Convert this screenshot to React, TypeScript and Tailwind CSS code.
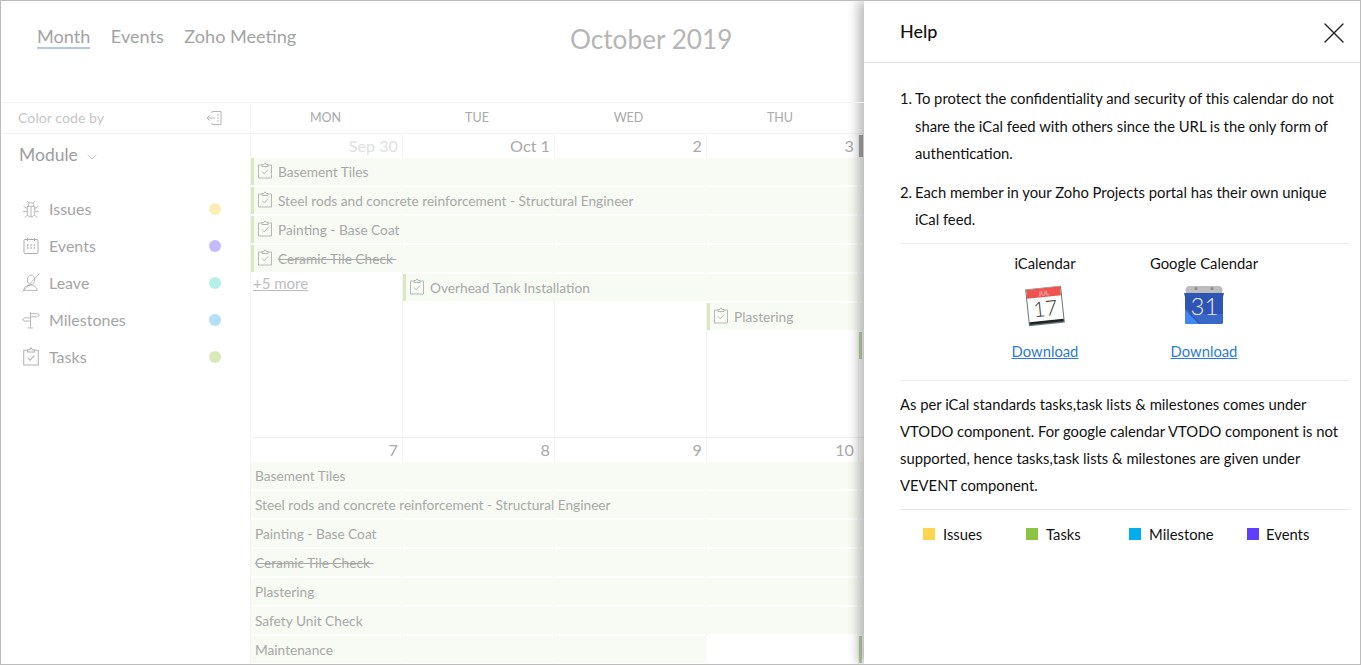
import * as React from 'react'
import { X, ChevronDown } from 'lucide-react'

const sideItems = [
  { name: 'Issues', dot: 'bg-[#fdeeb8]', icon: 'bug' },
  { name: 'Events', dot: 'bg-[#c5baff]', icon: 'cal' },
  { name: 'Leave', dot: 'bg-[#b5efe9]', icon: 'leave' },
  { name: 'Milestones', dot: 'bg-[#b2dffb]', icon: 'sign' },
  { name: 'Tasks', dot: 'bg-[#d7e9b9]', icon: 'task' },
]

function TaskIcon({ size = 16 }: { size?: number }) {
  return (
    <svg width={size} height={size + 1} viewBox="0 0 16 17" fill="none" stroke="#b0b0b0" strokeWidth="0.9">
      <path d="M5 3H1.500v13h13V3H11" />
      <path d="M5 4.500V2.500h1.700L8 .8l1.300 1.700H11v2z" />
      <path d="M5 9.500l2.200 2.300L11 7.500" />
    </svg>
  )
}

function SideIcon({ kind }: { kind: string }) {
  if (kind === 'task') return <TaskIcon size={18} />
  if (kind === 'bug')
    return (
      <svg width="18" height="18" viewBox="0 0 17 17" fill="none" stroke="#adadad" strokeWidth="0.8">
        <path d="M5 6h7v6a3.500 4 0 0 1-7 0z" />
        <path d="M6 6V4.500a2.500 2 0 0 1 5 0V6M8.500 6v10" />
        <path d="M5 1l1.500 2M12 1l-1.500 2M5 8L1.500 6M12 8l3.500-2M5 11H1M12 11h4M5.500 14l-3 2.500M11.500 14l3 2.500" />
      </svg>
    )
  if (kind === 'cal')
    return (
      <svg width="16" height="16" viewBox="0 0 16 16" fill="none" stroke="#adadad" strokeWidth="1" className="ml-[1px]">
        <rect x="1" y="1.500" width="14" height="14" rx="1" />
        <path d="M4.500 0v3M11.500 0v3" />
        <path d="M4 7h1.500M7.300 7h1.500M10.600 7h1.500M4 10h1.500M7.300 10h1.500M10.600 10h1.500" strokeWidth="1.500" />
      </svg>
    )
  if (kind === 'leave')
    return (
      <svg width="18" height="19" viewBox="0 0 17 18" fill="none" stroke="#adadad" strokeWidth="0.8">
        <ellipse cx="8.500" cy="6.500" rx="3.500" ry="4.500" />
        <path d="M1.500 16.500c.5-3.500 3-5 6.500-5 3 0 6 1.500 6.500 5z" />
        <path d="M0.500 17.500L16.500 .5" />
      </svg>
    )
  return (
    <svg width="18" height="18" viewBox="0 0 17 17" fill="none" stroke="#adadad" strokeWidth="0.8">
      <path d="M8 1v15M5.500 16h5" />
      <path d="M8 2.500h6.500l2 1.500-2 1.500H8M8 6.500H2.500L.5 8l2 1.500H8" />
    </svg>
  )
}

function CalEvent({ name, col, row, icon = true, strike, start }: {
  name?: string
  col: string
  row: string
  icon?: boolean
  strike?: boolean
  start?: boolean
}) {
  return (
    <div className={`${col} ${row} flex h-[27px] items-center overflow-hidden whitespace-nowrap bg-[#f7fbf3] text-[13.7px] text-[#a8a8a8] ${start ? 'border-l-[3px] border-[#d8eabf] pl-[3px]' : 'pl-1'}`}>
      {icon && <span className="mb-[3px] mr-[5px] flex"><TaskIcon /></span>}
      <span className={`pt-[1px] ${strike ? 'line-through' : ''}`}>{strike ? `${name}\u00a0` : name}</span>
    </div>
  )
}

function DayCells({ days, rows }: { days: { n: string; light?: boolean }[]; rows: string }) {
  return (
    <>
      {days.map((d, i) => (
        <div
          key={d.n}
          className={`${['col-start-1', 'col-start-2', 'col-start-3', 'col-start-4', 'col-start-5'][i]} row-start-1 ${rows} border-r border-[#f3f3f3] pr-[4px] text-right text-[16.200px] leading-[24px] ${d.light ? 'text-[#e0e0e0]' : 'text-[#a9a9a9]'}`}
        >
          {d.n}
        </div>
      ))}
    </>
  )
}

function Week1() {
  return (
    <div className="grid h-[304px] grid-cols-[152px_152px_152px_152px_152px] grid-rows-[24px_29px_29px_29px_29px_29px_29px_29px_1fr] border-b border-[#f0f0f0]">
      <DayCells days={[{ n: 'Sep 30', light: true }, { n: 'Oct 1' }, { n: '2' }, { n: '3' }, { n: '' }]} rows="row-end-[10]" />
      <CalEvent name="Basement Tiles" col="col-start-1 col-end-6" row="row-start-2" start />
      <CalEvent name="Steel rods and concrete reinforcement - Structural Engineer" col="col-start-1 col-end-6" row="row-start-3" start />
      <CalEvent name="Painting - Base Coat" col="col-start-1 col-end-6" row="row-start-4" start />
      <CalEvent name="Ceramic Tile Check" col="col-start-1 col-end-6" row="row-start-5" strike start />
      <a className="col-start-1 row-start-6 pl-[2px] text-[15px] leading-[18px] text-[#bdbdbd] underline">+5 more</a>
      <CalEvent name="Overhead Tank Installation" col="col-start-2 col-end-6" row="row-start-6" start />
      <CalEvent name="Plastering" col="col-start-4 col-end-6" row="row-start-7" start />
      <div className="col-start-5 row-start-8 h-[27px] border-l-[3px] border-[#b5cf9c]" />
      <div className="col-start-5 row-start-1 mt-[1px] h-[22px] w-[4px] bg-[#9d9d9d]" />
    </div>
  )
}

function Week2() {
  return (
    <div className="grid h-[228px] grid-cols-[152px_152px_152px_152px_152px] grid-rows-[24px_29px_29px_29px_29px_29px_29px_29px]">
      <DayCells days={[{ n: '7' }, { n: '8' }, { n: '9' }, { n: '10' }, { n: '' }]} rows="row-end-[9]" />
      <CalEvent name="Basement Tiles" col="col-start-1 col-end-6" row="row-start-2" icon={false} />
      <CalEvent name="Steel rods and concrete reinforcement - Structural Engineer" col="col-start-1 col-end-6" row="row-start-3" icon={false} />
      <CalEvent name="Painting - Base Coat" col="col-start-1 col-end-6" row="row-start-4" icon={false} />
      <CalEvent name="Ceramic Tile Check" col="col-start-1 col-end-6" row="row-start-5" icon={false} strike />
      <CalEvent name="Plastering" col="col-start-1 col-end-6" row="row-start-6" icon={false} />
      <CalEvent name="Safety Unit Check" col="col-start-1 col-end-6" row="row-start-7" icon={false} />
      <CalEvent name="Maintenance" col="col-start-1 col-end-4" row="row-start-8" icon={false} />
      <div className="col-start-5 row-start-8 h-[27px] border-l-[3px] border-[#b5cf9c]" />
    </div>
  )
}

function AppleCal() {
  return (
    <svg width="42" height="44" viewBox="0 0 42 44">
      <g transform="rotate(-6 21 22)">
        <rect x="3" y="3.500" width="36" height="37" fill="#65777f" />
        <rect x="4" y="4" width="34" height="33" fill="#fff" />
        <rect x="4" y="4" width="34" height="9" fill="#ee5350" />
        <rect x="4" y="36.500" width="34" height="2.500" fill="#222" />
        <text x="21" y="11.500" textAnchor="middle" fontSize="6.500" fill="#f8c9c8" fontFamily="Lato">JUL</text>
        <text x="21" y="32" textAnchor="middle" fontSize="21" fontWeight="300" fill="#333" fontFamily="Lato">17</text>
      </g>
    </svg>
  )
}

function GoogleCal() {
  return (
    <svg width="42" height="44" viewBox="0 0 42 44">
      <path d="M3 8a4 4 0 0 1 4-6h28a4 4 0 0 1 4 6v6H3z" fill="#bcbcbc" />
      <circle cx="13" cy="4.500" r="1.500" fill="#8a8a8a" />
      <circle cx="29" cy="4.500" r="1.500" fill="#8a8a8a" />
      <path d="M1 9h40l-1 4v25a2 2 0 0 1-2 2H4a2 2 0 0 1-2-2V13z" fill="#2f55b4" />
      <path d="M2 24l16 16h20a2 2 0 0 0 2-2v-8H2z" fill="#3a68c8" />
      <path d="M2 26l14 14H4a2 2 0 0 1-2-2z" fill="#4285f4" />
      <text x="21.500" y="31" textAnchor="middle" fontSize="24" fontWeight="300" fill="#e4eaf7" fontFamily="Lato">31</text>
    </svg>
  )
}

function HelpPanel() {
  return (
    <aside className="flex h-full w-[496px] shrink-0 flex-col bg-white text-[14.800px] text-[#111] shadow-[-6px_0_10px_rgba(90,90,90,0.4)]">
      <div className="flex h-[62px] shrink-0 items-center justify-between border-b border-[#e6e6e6] pl-[36px] pr-[8px]">
        <span className="text-[18px] font-medium">Help</span>
        <X size={36} strokeWidth={0.9} color="#222" className="mt-[2px]" />
      </div>
      <div className="pl-[36px] pr-[11px]">
        <ol className="border-b border-[#ececec] pb-[9px] pt-[22px] leading-[27.500px]">
          <li className="flex pr-2">
            <span className="w-[15px] shrink-0">1.</span>
            <span>To protect the confidentiality and security of this calendar do not share the iCal feed with others since the URL is the only form of authentication.</span>
          </li>
          <li className="mt-[11px] flex pr-2">
            <span className="w-[15px] shrink-0">2.</span>
            <span>Each member in your Zoho Projects portal has their own unique iCal feed.</span>
          </li>
        </ol>
        <div className="flex h-[137px] justify-center gap-[67px] border-b border-[#ececec] pt-[9px] text-center">
          <div className="flex w-[92px] flex-col items-center">
            <span className="leading-[20px]">iCalendar</span>
            <span className="mt-[11px] flex"><AppleCal /></span>
            <a className="mt-[13px] leading-[20px] text-[#2c7cd0] underline">Download</a>
          </div>
          <div className="flex w-[92px] flex-col items-center whitespace-nowrap">
            <span className="leading-[20px]">Google Calendar</span>
            <span className="mt-[11px] flex"><GoogleCal /></span>
            <a className="mt-[13px] leading-[20px] text-[#2c7cd0] underline">Download</a>
          </div>
        </div>
        <p className="border-b border-[#e6e6e6] pb-[10px] pt-[10px] leading-[27px]">
          As per iCal standards tasks,task lists &amp; milestones comes under VTODO component. For google calendar VTODO component is not supported, hence tasks,task lists &amp; milestones are given under VEVENT component.
        </p>
        <div className="flex pl-[23px] pt-[14px] leading-[20px]">
          <span className="flex w-[103px] items-center gap-[8px]"><i className="size-3 bg-[#ffd54f]" />Issues</span>
          <span className="flex w-[103px] items-center gap-[8px]"><i className="size-3 bg-[#8bc53f]" />Tasks</span>
          <span className="flex w-[118px] items-center gap-[8px]"><i className="size-3 bg-[#00aeef]" />Milestone</span>
          <span className="flex items-center gap-[7px]"><i className="size-3 bg-[#5e3fff]" />Events</span>
        </div>
      </div>
    </aside>
  )
}

export default function App() {
  return (
    <div className="flex h-[665px] w-[1361px] overflow-hidden border border-[#bcbcbc] bg-white font-['Lato',sans-serif]">
      <main className="flex min-w-0 flex-1 flex-col overflow-hidden">
        <header className="relative flex h-[102px] shrink-0 border-b border-[#f3f3f3] pl-[36px] pt-[23px] text-[18.100px] text-[#a3a3a3]">
          <div className="flex h-[25px] gap-[20.500px] leading-[24px]">
            <span className="h-[25px] border-b-2 border-[#b4c8e4]">Month</span>
            <span>Events</span>
            <span>Zoho Meeting</span>
          </div>
          <div className="absolute left-[569px] top-[22px] text-[26.200px] leading-[32px] text-[#b5b5b5]">October 2019</div>
        </header>
        <div className="flex min-h-0 flex-1">
          <nav className="w-[250px] shrink-0 border-r border-[#f3f3f3]">
            <div className="flex h-[31px] items-center justify-between border-b border-[#f3f3f3] pl-[17px] pr-[28px] text-[14.200px] text-[#c6c6c6]">
              <span>Color code by</span>
              <svg width="16" height="16" viewBox="0 0 16 16" fill="none" stroke="#b5b5b5" strokeWidth="1">
                <path d="M6 3V1.500h9v13H6V13M1 8h8M3.500 5.500L1 8l2.500 2.500M11 5h2M11 8h2M11 11h2" />
              </svg>
            </div>
            <div className="flex items-center pl-[18px] pt-[9px] text-[17.500px] leading-[24px] text-[#9d9d9d]">
              Module
              <ChevronDown size={16} strokeWidth={1} className="ml-[6px] mt-[3px]" color="#aaa" />
            </div>
            <ul className="pt-[23px]">
              {sideItems.map(s => (
                <li key={s.name} className="flex h-[37px] items-center pl-[21px] pr-[29px] text-[16px] text-[#a5a5a5]">
                  <span className="flex w-[27px]"><SideIcon kind={s.icon} /></span>
                  <span className="flex-1">{s.name}</span>
                  <i className={`size-3 rounded-full ${s.dot}`} />
                </li>
              ))}
            </ul>
          </nav>
          <section className="min-w-0 flex-1 overflow-hidden">
            <div className="grid h-[31px] grid-cols-[149px_149px_149px_149px_149px] gap-x-[2.500px] border-b border-[#f3f3f3] text-center text-[12.500px] leading-[29px] text-[#a9a9a9]">
              <span>MON</span>
              <span>TUE</span>
              <span>WED</span>
              <span>THU</span>
            </div>
            <Week1 />
            <Week2 />
          </section>
        </div>
      </main>
      <HelpPanel />
    </div>
  )
}
